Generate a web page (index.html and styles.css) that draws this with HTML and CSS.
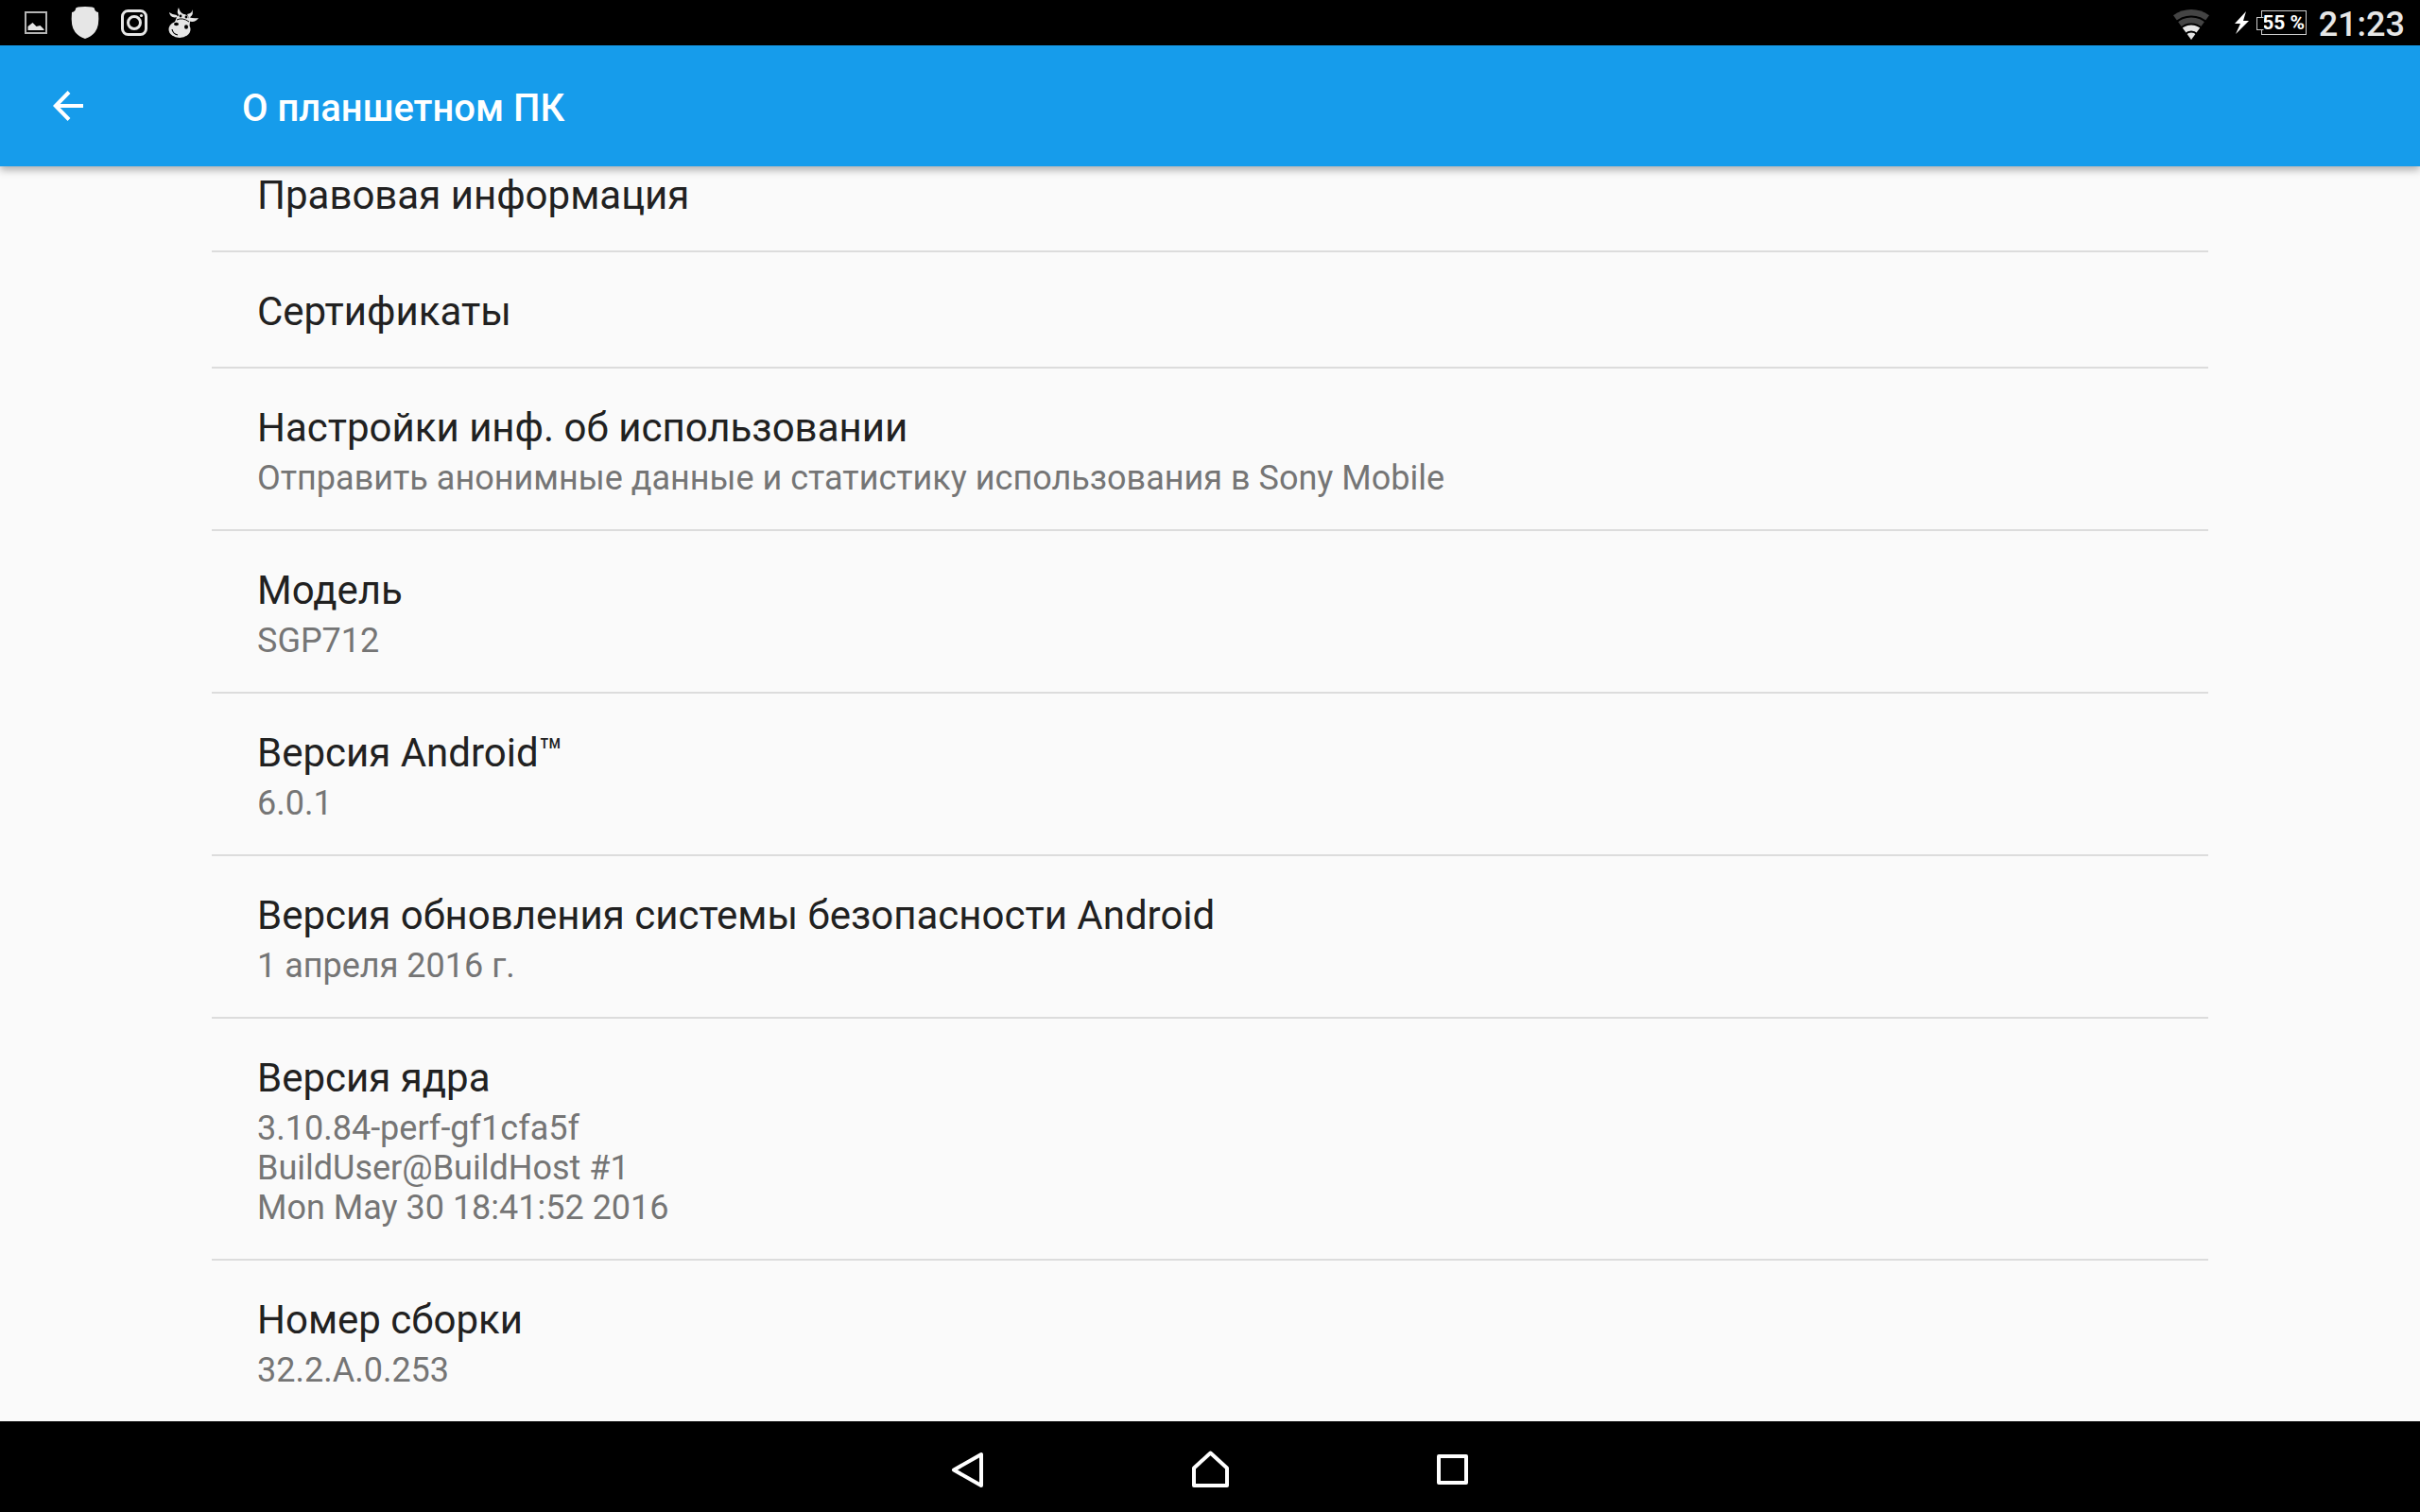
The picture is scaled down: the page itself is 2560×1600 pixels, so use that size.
FILE: index.html
```html
<!DOCTYPE html>
<html lang="ru">
<head>
  <meta charset="UTF-8" />
  <meta name="viewport" content="width=device-width, initial-scale=1" />
  <title>О планшетном ПК</title>
  <link rel="stylesheet" href="styles.css">
</head>
<body>
  <div class="status-bar">
    <div class="notifications">
      <svg class="status-icon" viewBox="0 0 40 48">
        <rect x="9" y="13" width="22" height="22" fill="none" stroke="#b4b4b4" stroke-width="2" />
        <path d="M11.500 32v-4l5-4 4 4 4-1 4 4v1z" fill="#e6e6e6" />
      </svg>
      <svg class="status-icon" viewBox="0 0 40 48">
        <path d="M10 9q0-2 10-2t10 2q0 3 4 4 1.500 15-3.500 21-4 5-10.500 7-6.500-2-10.500-7-5-6-3.500-21 4-1 4-4z" fill="#e6e6e6" />
      </svg>
      <svg class="status-icon" viewBox="0 0 40 48" fill="none" stroke="#e6e6e6" stroke-width="3">
        <rect x="7.500" y="11.500" width="25" height="25" rx="6" />
        <circle cx="20" cy="24" r="6.500" />
        <circle cx="27.500" cy="16.500" r="1.600" fill="#e6e6e6" stroke="none" />
      </svg>
      <svg class="status-icon" viewBox="0 0 40 48" fill="#e6e6e6">
        <path d="M15 8q-3 5 1 9l4-2q-4-2-5-7zM29 10q1 4-5 5l2 4q6-4 3-9z" />
        <path d="M5 13q1 7 9 5l-1-2q-4 0-8-3zM26 18q4 2 10 1-4 6-11 3z" />
        <path d="M13 18q5-6 12-1l2 6-1 8H8z" />
        <ellipse cx="16" cy="31" rx="11.500" ry="9" />
        <path d="M13 21q6-3 13 2" fill="none" stroke="#000" stroke-width="1" />
        <g fill="#000">
          <circle cx="17" cy="17" r="1.400" />
          <circle cx="23" cy="18" r="1.400" />
          <ellipse cx="12.500" cy="25.500" rx="2.500" ry="1.800" />
          <ellipse cx="23" cy="28.500" rx="2" ry="2.200" />
        </g>
        <path d="M8 31q1 5 6 6" fill="none" stroke="#000" stroke-width="1.200" />
      </svg>
    </div>
    <div class="system">
      <svg class="wifi-icon" viewBox="0 0 40 48">
        <path d="M20 42L1 16.200a32 32 0 0 1 38 0z" fill="#444" />
        <path d="M20 42l-9.500-12.900a16 16 0 0 1 19 0z" fill="#e6e6e6" />
        <g fill="none" stroke="#000" stroke-width="2">
          <circle cx="20" cy="42" r="24.500" />
          <circle cx="20" cy="42" r="16.500" />
          <circle cx="20" cy="42" r="8.500" />
        </g>
      </svg>
      <svg class="bolt-icon" viewBox="0 0 16 48">
        <path d="M12 12L0 25h6L1 36l14-14H9z" fill="#fff" />
      </svg>
      <span class="battery">55 %</span>
      <span class="clock">21:23</span>
    </div>
  </div>

  <header class="app-bar">
    <button type="button" class="back-button" aria-label="Назад">
      <svg viewBox="0 0 48 48"><path d="M40 24H11M25 9.500L10.800 24 25 38.500" /></svg>
    </button>
    <h1>О планшетном ПК</h1>
  </header>

  <main class="content">
    <ul class="settings">
      <li><h2>Правовая информация</h2></li>
      <li><h2>Сертификаты</h2></li>
      <li>
        <h2>Настройки инф. об использовании</h2>
        <p>Отправить анонимные данные и статистику использования в Sony Mobile</p>
      </li>
      <li>
        <h2>Модель</h2>
        <p>SGP712</p>
      </li>
      <li>
        <h2>Версия Android™</h2>
        <p>6.0.1</p>
      </li>
      <li>
        <h2>Версия обновления системы безопасности Android</h2>
        <p>1 апреля 2016 г.</p>
      </li>
      <li>
        <h2>Версия ядра</h2>
        <p>3.10.84-perf-gf1cfa5f<br>BuildUser@BuildHost #1<br>Mon May 30 18:41:52 2016</p>
      </li>
      <li>
        <h2>Номер сборки</h2>
        <p>32.2.A.0.253</p>
      </li>
    </ul>
  </main>

  <nav class="nav-bar">
    <button type="button" aria-label="Назад">
      <svg viewBox="0 0 48 48"><path d="M38 11v33L9 27.500z" /></svg>
    </button>
    <button type="button" aria-label="Домой">
      <svg viewBox="0 0 48 48"><path d="M24.500 9.500L42 25.500V44H7V25.500z" /></svg>
    </button>
    <button type="button" aria-label="Недавние">
      <svg viewBox="0 0 48 48"><path d="M10 13h29v28H10z" /></svg>
    </button>
  </nav>
</body>
</html>
```

FILE: styles.css
```css
* {
  box-sizing: border-box;
}
body {
  margin: 0;
  min-height: 100vh;
  display: flex;
  flex-direction: column;
  font-family: Roboto, "Noto Sans", sans-serif;
  background: #fafafa;
  color: #212121;
}
h1, h2, p, ul {
  margin: 0;
  padding: 0;
}
button {
  padding: 0;
  border: none;
  background: none;
  cursor: pointer;
}
svg {
  display: block;
}

/* status bar */
.status-bar {
  position: relative;
  z-index: 2;
  display: flex;
  justify-content: space-between;
  height: 48px;
  padding: 0 16px 0 18px;
  background: #000;
  color: #e6e6e6;
}
.notifications, .system {
  display: flex;
  align-items: center;
}
.notifications {
  gap: 12px;
}
.status-icon, .wifi-icon {
  width: 40px;
  height: 48px;
}
.bolt-icon {
  width: 16px;
  height: 48px;
  margin: 0 12px 0 26px;
}
.battery {
  position: relative;
  width: 48px;
  height: 26px;
  border: 1px solid #ccc;
  font-size: 21px;
  line-height: 24px;
  font-weight: bold;
  text-align: center;
  white-space: nowrap;
  color: #fff;
}
.battery::before {
  content: "";
  position: absolute;
  left: -6px;
  top: 6px;
  width: 6px;
  height: 12px;
  border: 1px solid #ccc;
  border-right-color: #000;
  background: #000;
}
.clock {
  padding-top: 4px;
  margin-left: 13px;
  font-size: 36px;
  line-height: 44px;
  font-weight: 500;
}

/* app bar */
.app-bar {
  position: relative;
  z-index: 1;
  display: flex;
  align-items: center;
  height: 128px;
  padding-left: 48px;
  background: #169ceb;
  color: #fff;
  box-shadow: 0 4px 8px rgba(0, 0, 0, 0.3);
}
.back-button svg {
  width: 48px;
  height: 48px;
  fill: none;
  stroke: #fff;
  stroke-width: 4;
}
.app-bar h1 {
  padding-top: 6px;
  margin-left: 160px;
  font-size: 40px;
  line-height: 48px;
  font-weight: 500;
}

/* list, scrolled part of the way under the app bar */
.content {
  flex: 1;
  padding: 0 224px;
}
.settings {
  margin-top: -32px;
  list-style: none;
}
.settings li {
  padding: 38px 48px 33px;
}
.settings li + li {
  border-top: 2px solid #dcdcdc;
}
.settings h2 {
  font-size: 42px;
  line-height: 50px;
  font-weight: normal;
}
.settings p {
  margin-top: 7px;
  font-size: 36px;
  line-height: 42px;
  color: #757575;
}

/* navigation bar */
.nav-bar {
  display: flex;
  justify-content: center;
  align-items: center;
  gap: 208px;
  height: 96px;
  background: #000;
}
.nav-bar svg {
  width: 48px;
  height: 48px;
  fill: none;
  stroke: #fff;
  stroke-width: 4;
  stroke-linejoin: round;
}
```
